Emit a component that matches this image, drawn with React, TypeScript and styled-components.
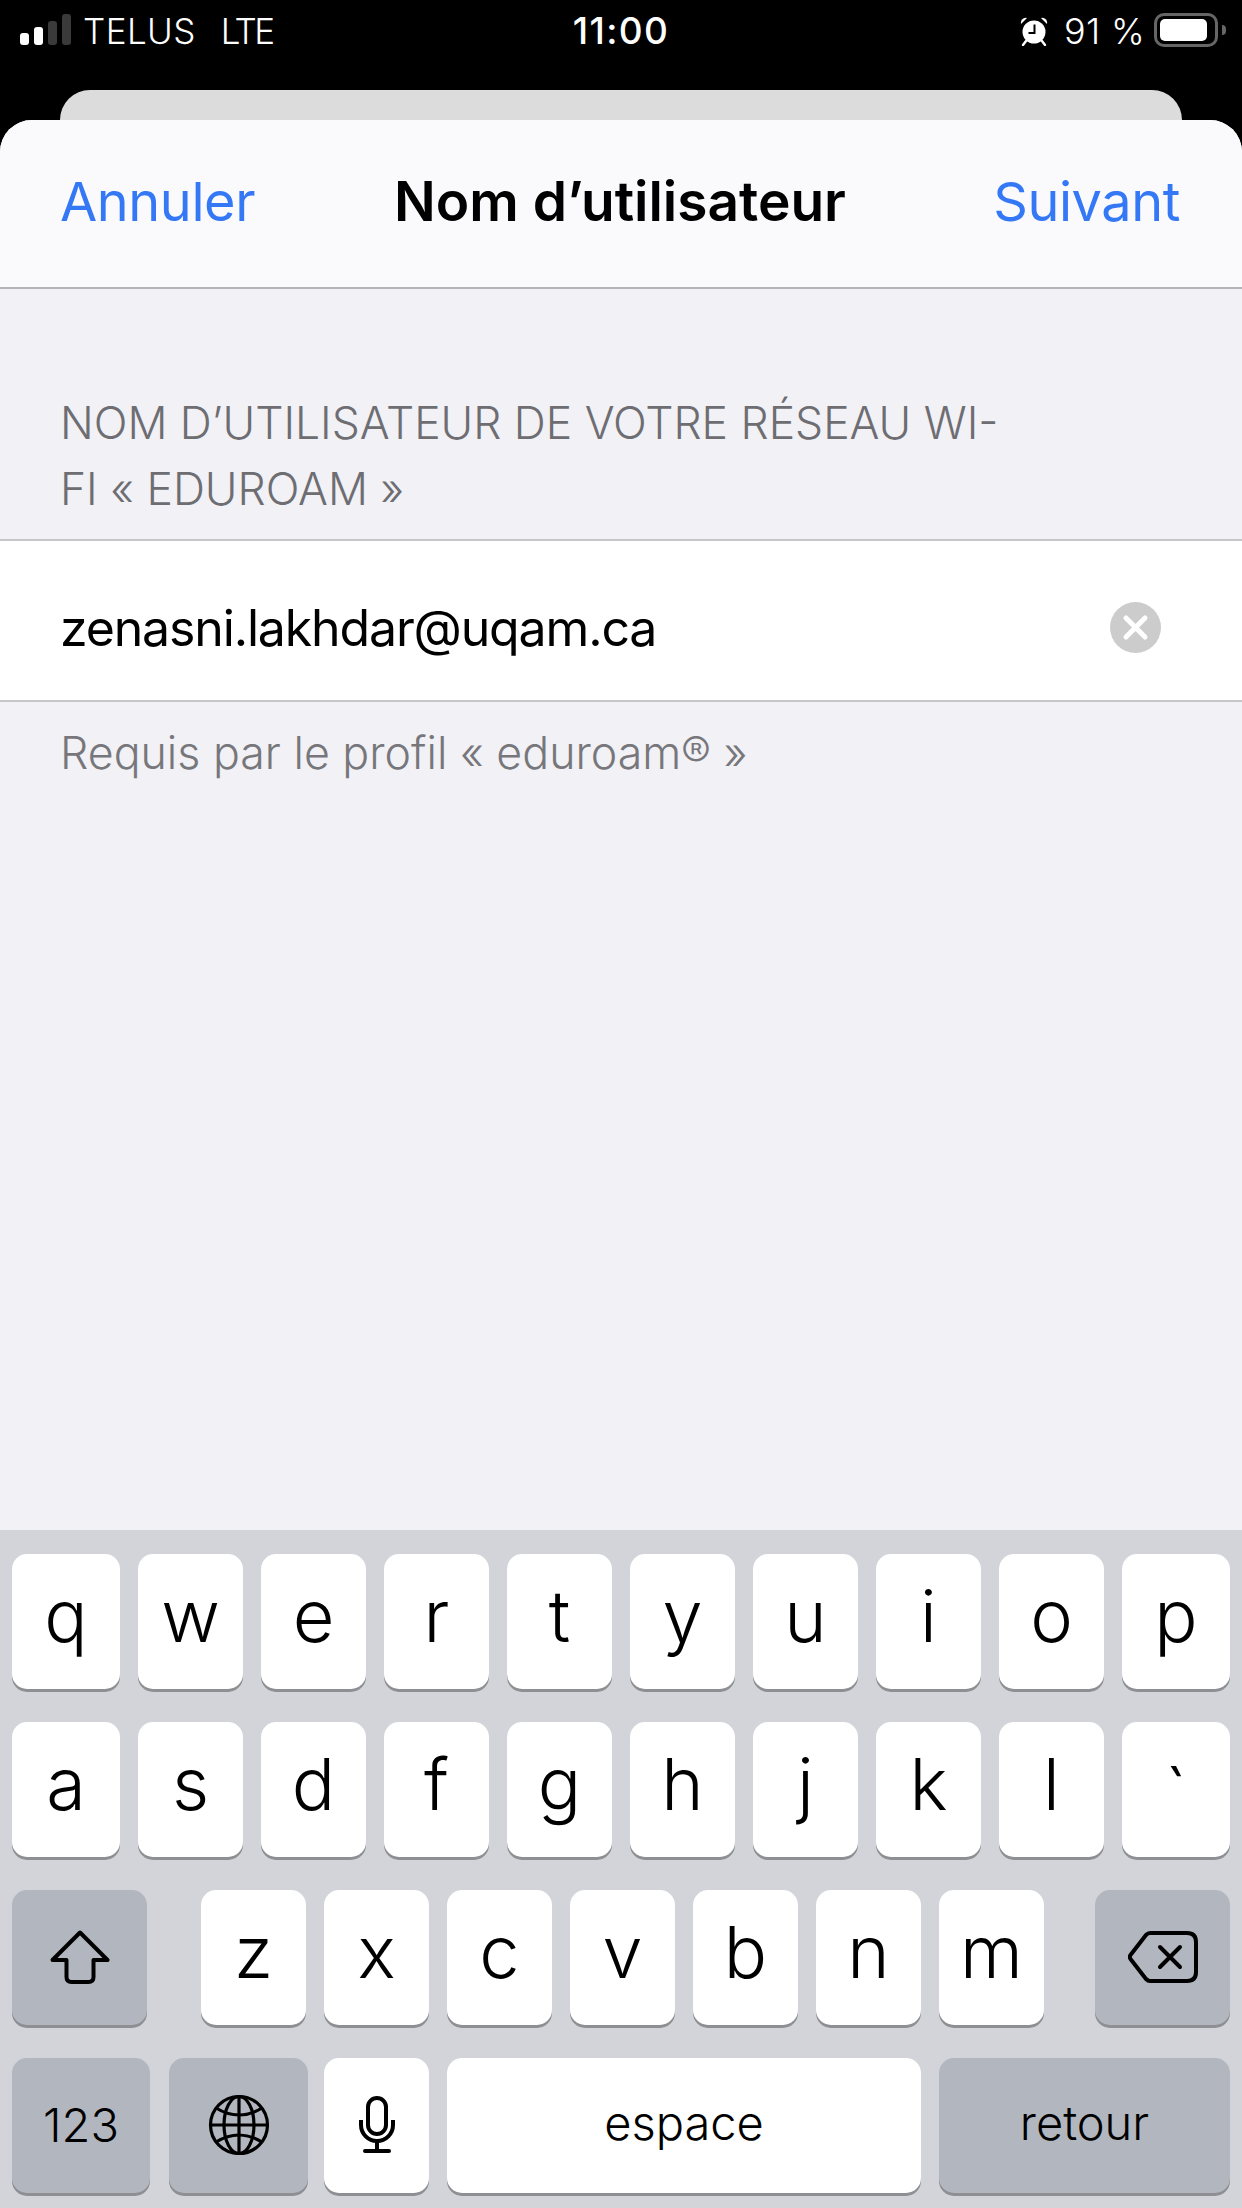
import React from "react";
import styled, { createGlobalStyle } from "styled-components";

const Global = createGlobalStyle`
  html, body { margin: 0; padding: 0; background: #000; }
  * { box-sizing: border-box; }
  body { font-family: Inter, "Liberation Sans", sans-serif; }
`;

const Screen = styled.div`
  width: 1242px;
  height: 2208px;
  background: #000;
  display: flex;
  flex-direction: column;
  overflow: hidden;
`;

const StatusBar = styled.div`
  height: 90px;
  padding: 13px 24px 0 20px;
  display: grid;
  grid-template-columns: 1fr auto 1fr;
  align-items: start;
  color: #fff;
  font-size: 35px;
  line-height: 36px;
  font-weight: 300;
`;

const StatusLeft = styled.div`
  display: flex;
  align-items: flex-start;
`;

const Signal = styled.div`
  display: flex;
  align-items: flex-end;
  gap: 5px;
  height: 32px;
  margin-right: 12px;
`;

const SignalBar = styled.span<{ $h: number; $on?: boolean }>`
  width: 9px;
  height: ${(p) => p.$h}px;
  border-radius: 3px;
  background: ${(p) => (p.$on ? "#fff" : "#3a3a3a")};
`;

const Carrier = styled.span`
  margin-right: 25px;
  letter-spacing: 0.4px;
`;

const Network = styled.span`
  letter-spacing: -2.6px;
`;

const Clock = styled.div`
  font-weight: 500;
  font-size: 37px;
  letter-spacing: 1.4px;
  margin-left: 4px;
`;

const StatusRight = styled.div`
  display: flex;
  align-items: flex-start;
  justify-content: flex-end;
`;

const Percent = styled.span`
  margin: 0 9px 0 15px;
  font-size: 36px;
  letter-spacing: 0.3px;
`;

const Battery = styled.div`
  width: 64px;
  height: 34px;
  border: 3px solid #666;
  border-radius: 10px;
  padding: 3px;
  position: relative;
  &::after {
    content: "";
    position: absolute;
    right: -11px;
    top: 9px;
    width: 4px;
    height: 10px;
    border-radius: 0 4px 4px 0;
    background: #666;
  }
`;

const BatteryFill = styled.div`
  width: 90%;
  height: 100%;
  background: #fff;
  border-radius: 5px;
`;

const BackSheet = styled.div`
  height: 30px;
  margin: 0 60px;
  background: #dcdcdc;
  border-radius: 30px 30px 0 0;
`;

const Sheet = styled.div`
  flex: 1;
  display: flex;
  flex-direction: column;
  background: #f1f1f6;
  border-radius: 32px 32px 0 0;
  overflow: hidden;
`;

const NavBar = styled.div`
  height: 169px;
  flex: none;
  background: #fafafc;
  border-bottom: 2px solid #b4b4b6;
  padding: 0 62px 5px 60px;
  display: grid;
  grid-template-columns: 1fr auto 1fr;
  align-items: center;
`;

const NavAction = styled.span<{ $right?: boolean }>`
  color: #3478f6;
  font-size: 54px;
  letter-spacing: -0.4px;
  font-weight: 400;
  text-align: ${(p) => (p.$right ? "right" : "left")};
`;

const NavTitle = styled.span`
  color: #000;
  font-size: 55px;
  font-weight: 600;
`;

const Content = styled.div`
  flex: 1;
`;

const SectionHeader = styled.div`
  padding: 101px 230px 0 60px;
  height: 250px;
  color: #6d6d72;
  font-size: 44.4px;
  line-height: 66px;
  font-weight: 300;
`;

const FieldRow = styled.div`
  height: 163px;
  background: #fff;
  border-top: 2px solid #c6c6c8;
  border-bottom: 2px solid #c6c6c8;
  padding: 14px 81px 0 60px;
  display: flex;
  align-items: center;
  justify-content: space-between;
  color: #000;
`;

const FieldValue = styled.span`
  font-size: 50px;
  letter-spacing: -1.15px;
  font-weight: 400;
`;

const ClearButton = styled.span`
  width: 51px;
  height: 51px;
  display: flex;
`;

const Footer = styled.div`
  padding: 18px 60px 0;
  color: #77777b;
  font-size: 44.7px;
  line-height: 66px;
  font-weight: 300;
`;

const Keyboard = styled.div`
  height: 678px;
  flex: none;
  background: #d3d4d9;
  padding: 24px 12px 0;
  display: flex;
  flex-direction: column;
  gap: 33px;
`;

const KeyRow = styled.div`
  display: flex;
  gap: 18px;
`;

const ShiftRow = styled.div`
  display: flex;
  gap: 0;
`;

const Key = styled.div<{ $w?: number; $dark?: boolean; $small?: boolean }>`
  width: ${(p) => p.$w ?? 105}px;
  flex: none;
  height: 135px;
  border-radius: 15px;
  background: ${(p) => (p.$dark ? "#b2b6bf" : "#fff")};
  box-shadow: 0 3px 0 #8e8f93;
  display: flex;
  align-items: center;
  justify-content: center;
  color: #000;
  font-size: ${(p) => (p.$small ? 47 : 72)}px;
  font-weight: 300;
  padding-bottom: ${(p) => (p.$small ? 2 : 12)}px;
`;

const WordKey = styled(Key)`
  padding-bottom: 7px;
`;

const BacktickKey = styled(Key)`
  padding: 10px 0 0;
`;

const LetterGroup = styled.div`
  display: flex;
  gap: 18px;
  margin: 0 51px 0 54px;
`;

const GlobeKey = styled(Key)`
  margin: 0 -2px 0 1px;
`;

const rowOne = "qwertyuiop".split("");
const rowTwo = "asdfghjkl".split("");
const rowThree = "zxcvbnm".split("");

const AlarmSvg = styled.svg`
  margin-top: 3px;
`;

const AlarmIcon = () => (
  <AlarmSvg width="30" height="30" viewBox="0 0 30 30">
    <circle cx="15" cy="16" r="11.5" fill="#fff" />
    <path d="M2 8 A5 5 0 0 1 8 2 Z" fill="#fff" />
    <path d="M28 8 A5 5 0 0 0 22 2 Z" fill="#fff" />
    <path d="M7 25 L4 29 M23 25 L26 29" stroke="#fff" strokeWidth="2.4" strokeLinecap="round" />
    <path d="M15.5 8.5 V17 H9.5" stroke="#000" strokeWidth="2" fill="none" />
  </AlarmSvg>
);

const ClearIcon = () => (
  <svg width="51" height="51" viewBox="0 0 51 51">
    <circle cx="25.5" cy="25.5" r="25.5" fill="#cccccc" />
    <path d="M16 16 L35 35 M35 16 L16 35" stroke="#fff" strokeWidth="5" strokeLinecap="round" />
  </svg>
);

const ShiftIcon = () => (
  <svg width="60" height="54" viewBox="0 0 60 54" fill="none" stroke="#000" strokeWidth="4" strokeLinejoin="round">
    <path d="M30 2.5 L57.5 30 H43.5 V47 Q43.5 52 38.5 52 H21.5 Q16.5 52 16.5 47 V30 H2.5 Z" />
  </svg>
);

const DeleteIcon = () => (
  <svg width="70" height="52" viewBox="0 0 70 52" fill="none" stroke="#000" strokeWidth="4" strokeLinejoin="round" strokeLinecap="round">
    <path d="M22 2 H59 Q68 2 68 11 V41 Q68 50 59 50 H22 Q20 50 18 48 L2.5 28 Q1 26 2.5 24 L18 4 Q20 2 22 2 Z" />
    <path d="M32 16 L52 36 M52 16 L32 36" />
  </svg>
);

const GlobeIcon = () => (
  <svg width="62" height="62" viewBox="0 0 62 62" fill="none" stroke="#000" strokeWidth="3.2">
    <circle cx="31" cy="31" r="28.5" />
    <ellipse cx="31" cy="31" rx="15" ry="28.5" />
    <path d="M31 2.5 V59.5 M2.5 31 H59.5" />
    <path d="M8 14 Q31 28 54 14 M8 48 Q31 34 54 48" />
  </svg>
);

const MicIcon = () => (
  <svg width="36" height="58" viewBox="0 0 36 58" fill="none" stroke="#000" strokeWidth="4" strokeLinecap="butt">
    <rect x="9" y="2" width="18" height="36" rx="9" />
    <path d="M2 24 V29 A16 16 0 0 0 34 29 V24" />
    <path d="M18 45 V54" />
    <path d="M6 55 H30" strokeWidth="4" strokeLinecap="round" />
  </svg>
);

export default function App() {
  return (
    <Screen>
      <Global />
      <StatusBar>
        <StatusLeft>
          <Signal>
            <SignalBar $h={12} $on />
            <SignalBar $h={18} $on />
            <SignalBar $h={24} />
            <SignalBar $h={31} />
          </Signal>
          <Carrier>TELUS</Carrier>
          <Network>LTE</Network>
        </StatusLeft>
        <Clock>11:00</Clock>
        <StatusRight>
          <AlarmIcon />
          <Percent>91 %</Percent>
          <Battery>
            <BatteryFill />
          </Battery>
        </StatusRight>
      </StatusBar>
      <BackSheet />
      <Sheet>
        <NavBar>
          <NavAction>Annuler</NavAction>
          <NavTitle>Nom d’utilisateur</NavTitle>
          <NavAction $right>Suivant</NavAction>
        </NavBar>
        <Content>
          <SectionHeader>NOM D’UTILISATEUR DE VOTRE RÉSEAU WI-FI « EDUROAM »</SectionHeader>
          <FieldRow>
            <FieldValue>zenasni.lakhdar@uqam.ca</FieldValue>
            <ClearButton>
              <ClearIcon />
            </ClearButton>
          </FieldRow>
          <Footer>Requis par le profil « eduroam® »</Footer>
        </Content>
        <Keyboard>
          <KeyRow>
            {rowOne.map((k, i) => (
              <Key key={k} $w={i === 0 || i === 9 ? 108 : 105}>{k}</Key>
            ))}
          </KeyRow>
          <KeyRow>
            {rowTwo.map((k, i) => (
              <Key key={k} $w={i === 0 ? 108 : 105}>{k}</Key>
            ))}
            <BacktickKey $w={108}>`</BacktickKey>
          </KeyRow>
          <ShiftRow>
            <Key $w={135} $dark $small>
              <ShiftIcon />
            </Key>
            <LetterGroup>
              {rowThree.map((k) => (
                <Key key={k}>{k}</Key>
              ))}
            </LetterGroup>
            <Key $w={135} $dark $small>
              <DeleteIcon />
            </Key>
          </ShiftRow>
          <KeyRow>
            <Key $w={138} $dark $small>123</Key>
            <GlobeKey $w={139} $dark $small>
              <GlobeIcon />
            </GlobeKey>
            <Key $small>
              <MicIcon />
            </Key>
            <WordKey $w={474} $small>espace</WordKey>
            <WordKey $w={291} $dark $small>retour</WordKey>
          </KeyRow>
        </Keyboard>
      </Sheet>
    </Screen>
  );
}
